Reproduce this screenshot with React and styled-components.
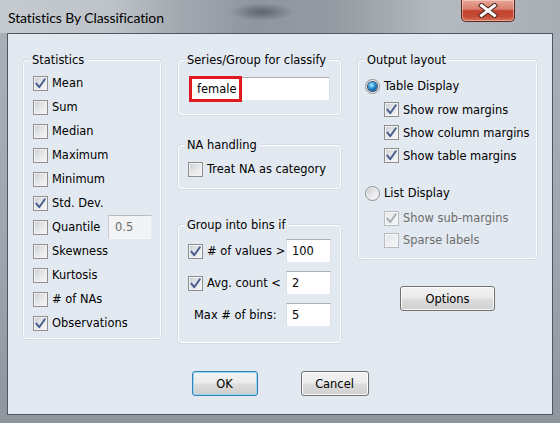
import React from 'react';
import styled, { createGlobalStyle } from 'styled-components';

const Global = createGlobalStyle`
  html, body { margin: 0; padding: 0; }
  body { width: 560px; height: 423px; overflow: hidden; font-family: "DejaVu Sans", sans-serif; }
  * { box-sizing: border-box; }
`;

const FS = '11.45px';

const Window = styled.div`
  width: 560px;
  height: 423px;
  display: flex;
  flex-direction: column;
  background: linear-gradient(180deg, #aab1b8 0%, #9ea5ad 60%, #8e959d 100%);
`;

const TitleBar = styled.div`
  height: 33px;
  flex: none;
  display: flex;
  align-items: flex-start;
  justify-content: space-between;
  padding: 0 45px 0 8px;
  background:
    radial-gradient(ellipse 32px 9px at 262px 12px, rgba(55, 60, 68, 0.55), rgba(55, 60, 68, 0)),
    linear-gradient(90deg, #c6cbd0 0%, #bec3c9 20%, #a3a9b0 32%, #8f969e 45%, #949ba2 60%, #b4bac0 78%, #a8aeb5 100%);
`;

const TitleText = styled.div`
  font-family: "Lato", "DejaVu Sans", sans-serif;
  font-size: 14px;
  letter-spacing: -0.1px;
  line-height: 20px;
  padding-top: 8px;
  color: #000;
`;

const CloseButton = styled.div`
  width: 54px;
  height: 22px;
  display: flex;
  align-items: center;
  justify-content: center;
  border: 1px solid #5a2a22;
  border-top: none;
  border-radius: 0 0 5px 5px;
  background: linear-gradient(180deg, #e6a697 0%, #d88170 42%, #c3432d 52%, #c44a33 78%, #da7558 100%);
  box-shadow: inset 0 0 0 1px rgba(255, 235, 225, 0.45);
`;

const Client = styled.div`
  flex: 1;
  margin: 0 7px 8px;
  border: 1px solid #4f5760;
  background: #e3e9f1;
  padding: 26px 15px 0;
  display: flex;
  flex-direction: column;
`;

const Columns = styled.div`
  display: grid;
  grid-template-columns: 138px 163px 179px;
  column-gap: 17px;
  align-items: start;
`;

const Column = styled.div`
  display: flex;
  flex-direction: column;
  align-items: ${p => (p.$center ? 'center' : 'stretch')};
`;

const Group = styled.div`
  align-self: stretch;
  height: ${p => p.$h}px;
  margin-top: ${p => p.$mt || 0}px;
  border: 1px solid #fbfcfd;
  border-radius: 3px;
  box-shadow: 0 0 0 1px rgba(200, 210, 222, 0.55);
  padding: 0 ${p => p.$pr || 0}px 0 ${p => p.$pl || 0}px;
  display: flex;
  flex-direction: column;
`;

const GroupTitle = styled.div`
  margin: -8px 0 0 ${p => 6 - (p.$pl || 0)}px;
  padding: 0 2px;
  align-self: flex-start;
  background: #e3e9f1;
  font-size: ${FS};
  line-height: 14px;
  color: #000;
  white-space: nowrap;
`;

const Rows = styled.div`
  display: flex;
  flex-direction: column;
  margin-top: ${p => p.$mt || 0}px;
  gap: ${p => p.$gap || 0}px;
`;

const Row = styled.div`
  display: flex;
  align-items: center;
  height: ${p => p.$h || 24}px;
  gap: 4px;
  margin-left: ${p => p.$indent || 0}px;
  margin-top: ${p => p.$mt || 0}px;
`;

const Label = styled.span`
  font-size: ${FS};
  color: ${p => (p.$disabled ? '#6d6d6d' : '#000')};
  white-space: nowrap;
  padding-left: ${p => p.$pl || 0}px;
`;

const Box = styled.span`
  width: 15px;
  height: 15px;
  flex: none;
  display: flex;
  align-items: center;
  justify-content: center;
  border: 1px solid ${p => (p.$disabled ? '#b9bcc0' : '#8e8f8f')};
  background: ${p =>
    p.$disabled
      ? 'linear-gradient(135deg, #e4e6e8 0%, #f6f6f6 100%)'
      : 'linear-gradient(135deg, #c9ccd1 0%, #e6e7e9 50%, #f8f8f8 100%)'};
  box-shadow: inset 0 0 0 1px ${p => (p.$disabled ? '#f7f7f7' : '#f3f3f3')};
`;

const RadioCircle = styled.span`
  width: 15px;
  height: 15px;
  flex: none;
  border-radius: 50%;
  display: flex;
  align-items: center;
  justify-content: center;
  border: 1px solid #8e8f8f;
  background: linear-gradient(135deg, #c6c9ce 0%, #e8e9eb 55%, #fbfbfb 100%);
  box-shadow: inset 0 0 0 1px #f4f4f4;
`;

const RadioDot = styled.span`
  width: 9px;
  height: 9px;
  border-radius: 50%;
  background: radial-gradient(circle at 40% 35%, #d6f2ff 0%, #5cc0f0 22%, #1a73bd 55%, #0b3c70 100%);
  box-shadow: 0 0 0 1px #2a4c72;
`;

const TextBox = styled.div`
  width: ${p => p.$w}px;
  height: 24px;
  flex: none;
  margin-left: ${p => (p.$push ? 'auto' : '0')};
  display: flex;
  align-items: center;
  padding-left: ${p => (p.$pad === undefined ? 5 : p.$pad)}px;
  border: 1px solid;
  border-color: ${p => (p.$disabled ? '#b8bcc2 #e6e9ee #f4f6f8 #c9ccd1' : '#abadb3 #dbdfe6 #e3e9ef #dbdfe6')};
  background: ${p => (p.$disabled ? '#f2f3f4' : '#fff')};
  font-size: ${FS};
  color: ${p => (p.$disabled ? '#6d6d6d' : '#000')};
`;

const Highlight = styled.span`
  width: 53px;
  height: 26px;
  margin: -1px 0 -1px -1px;
  border: 3px solid #e11a22;
  padding-left: 5px;
  display: flex;
  align-items: center;
`;

const FieldsGrid = styled.div`
  display: grid;
  grid-template-columns: 98px 45px;
  row-gap: 8px;
  margin-top: 7px;
  align-items: center;
`;

const Button = styled.button`
  width: ${p => p.$w}px;
  height: 25px;
  margin-top: ${p => p.$mt || 0}px;
  padding: 0;
  font-family: "DejaVu Sans", sans-serif;
  font-size: ${FS};
  color: #000;
  border-radius: 3px;
  border: 1px solid ${p => (p.$default ? '#3c7fb1' : '#707070')};
  background: linear-gradient(180deg, #f2f2f2 0%, #ebebeb 48%, #dddddd 52%, #cfcfcf 100%);
  box-shadow: inset 0 0 0 1px ${p => (p.$default ? '#8fd9f5' : '#fbfbfb')};
`;

const ButtonRow = styled.div`
  display: flex;
  justify-content: center;
  gap: 43px;
  margin-top: 28px;
`;

function Check({ checked, disabled }) {
  const c = disabled ? '#a9adb3' : '#4a5d8f';
  return (
    <Box $disabled={disabled}>
      {checked && (
        <svg width="11" height="11" viewBox="0 0 11 11">
          <path d="M1.4 5.6 L4.2 9.2 L9.8 1.2" fill="none" stroke={c} strokeWidth="2" strokeLinejoin="round" strokeLinecap="round" />
        </svg>
      )}
    </Box>
  );
}

function Radio({ selected }) {
  return <RadioCircle>{selected && <RadioDot />}</RadioCircle>;
}

function CheckRow({ label, checked, disabled, h, indent, mt, children }) {
  return (
    <Row $h={h} $indent={indent} $mt={mt}>
      <Check checked={checked} disabled={disabled} />
      <Label $disabled={disabled}>{label}</Label>
      {children}
    </Row>
  );
}

const stats = [
  ['Mean', true],
  ['Sum', false],
  ['Median', false],
  ['Maximum', false],
  ['Minimum', false],
  ['Std. Dev.', true],
  ['Quantile', false, true],
  ['Skewness', false],
  ['Kurtosis', false],
  ['# of NAs', false],
  ['Observations', true],
];

export default function App() {
  return (
    <>
      <Global />
      <Window>
        <TitleBar>
          <TitleText>Statistics By Classification</TitleText>
          <CloseButton>
            <svg width="20" height="15" viewBox="0 0 20 15">
              <path d="M3.5 2.5 L16.5 12.5 M16.5 2.5 L3.5 12.5" stroke="#4e2621" strokeWidth="5" strokeLinecap="square" />
              <path d="M3.5 2.5 L16.5 12.5 M16.5 2.5 L3.5 12.5" stroke="#ffffff" strokeWidth="3" strokeLinecap="square" />
            </svg>
          </CloseButton>
        </TitleBar>
        <Client>
          <Columns>
            <Column>
              <Group $h={279} $pl={9} $pr={8}>
                <GroupTitle $pl={9}>Statistics</GroupTitle>
                <Rows $mt={4}>
                  {stats.map(([label, checked, quantile]) => (
                    <CheckRow key={label} label={label} checked={checked}>
                      {quantile && (
                        <TextBox $w={44} $push $disabled $pad={6}>0.5</TextBox>
                      )}
                    </CheckRow>
                  ))}
                </Rows>
              </Group>
            </Column>
            <Column>
              <Group $h={55} $pl={10} $pr={10}>
                <GroupTitle $pl={10}>Series/Group for classify</GroupTitle>
                <Rows $mt={10}>
                  <TextBox $w={141} $pad={0}>
                    <Highlight>female</Highlight>
                  </TextBox>
                </Rows>
              </Group>
              <Group $h={44} $mt={30} $pl={9}>
                <GroupTitle $pl={9}>NA handling</GroupTitle>
                <Rows $mt={5}>
                  <CheckRow label="Treat NA as category" />
                </Rows>
              </Group>
              <Group $h={118} $mt={36} $pl={9}>
                <GroupTitle $pl={9}>Group into bins if</GroupTitle>
                <FieldsGrid>
                  <CheckRow label="# of values >" checked />
                  <TextBox $w={45}>100</TextBox>
                  <CheckRow label="Avg. count <" checked />
                  <TextBox $w={45}>2</TextBox>
                  <Row>
                    <Label $pl={6}>Max # of bins:</Label>
                  </Row>
                  <TextBox $w={45}>5</TextBox>
                </FieldsGrid>
              </Group>
            </Column>
            <Column $center>
              <Group $h={199} $pl={6}>
                <GroupTitle $pl={6}>Output layout</GroupTitle>
                <Rows $mt={7}>
                  <Row>
                    <Radio selected />
                    <Label>Table Display</Label>
                  </Row>
                  <CheckRow label="Show row margins" checked h={23} indent={19} />
                  <CheckRow label="Show column margins" checked h={23} indent={19} />
                  <CheckRow label="Show table margins" checked h={23} indent={19} />
                  <Row $mt={14}>
                    <Radio />
                    <Label>List Display</Label>
                  </Row>
                  <CheckRow label="Show sub-margins" checked disabled h={22} indent={19} mt={2} />
                  <CheckRow label="Sparse labels" disabled h={22} indent={19} />
                </Rows>
              </Group>
              <Button $w={95} $mt={27}>Options</Button>
            </Column>
          </Columns>
          <ButtonRow>
            <Button $w={66} $default>OK</Button>
            <Button $w={68}>Cancel</Button>
          </ButtonRow>
        </Client>
      </Window>
    </>
  );
}
